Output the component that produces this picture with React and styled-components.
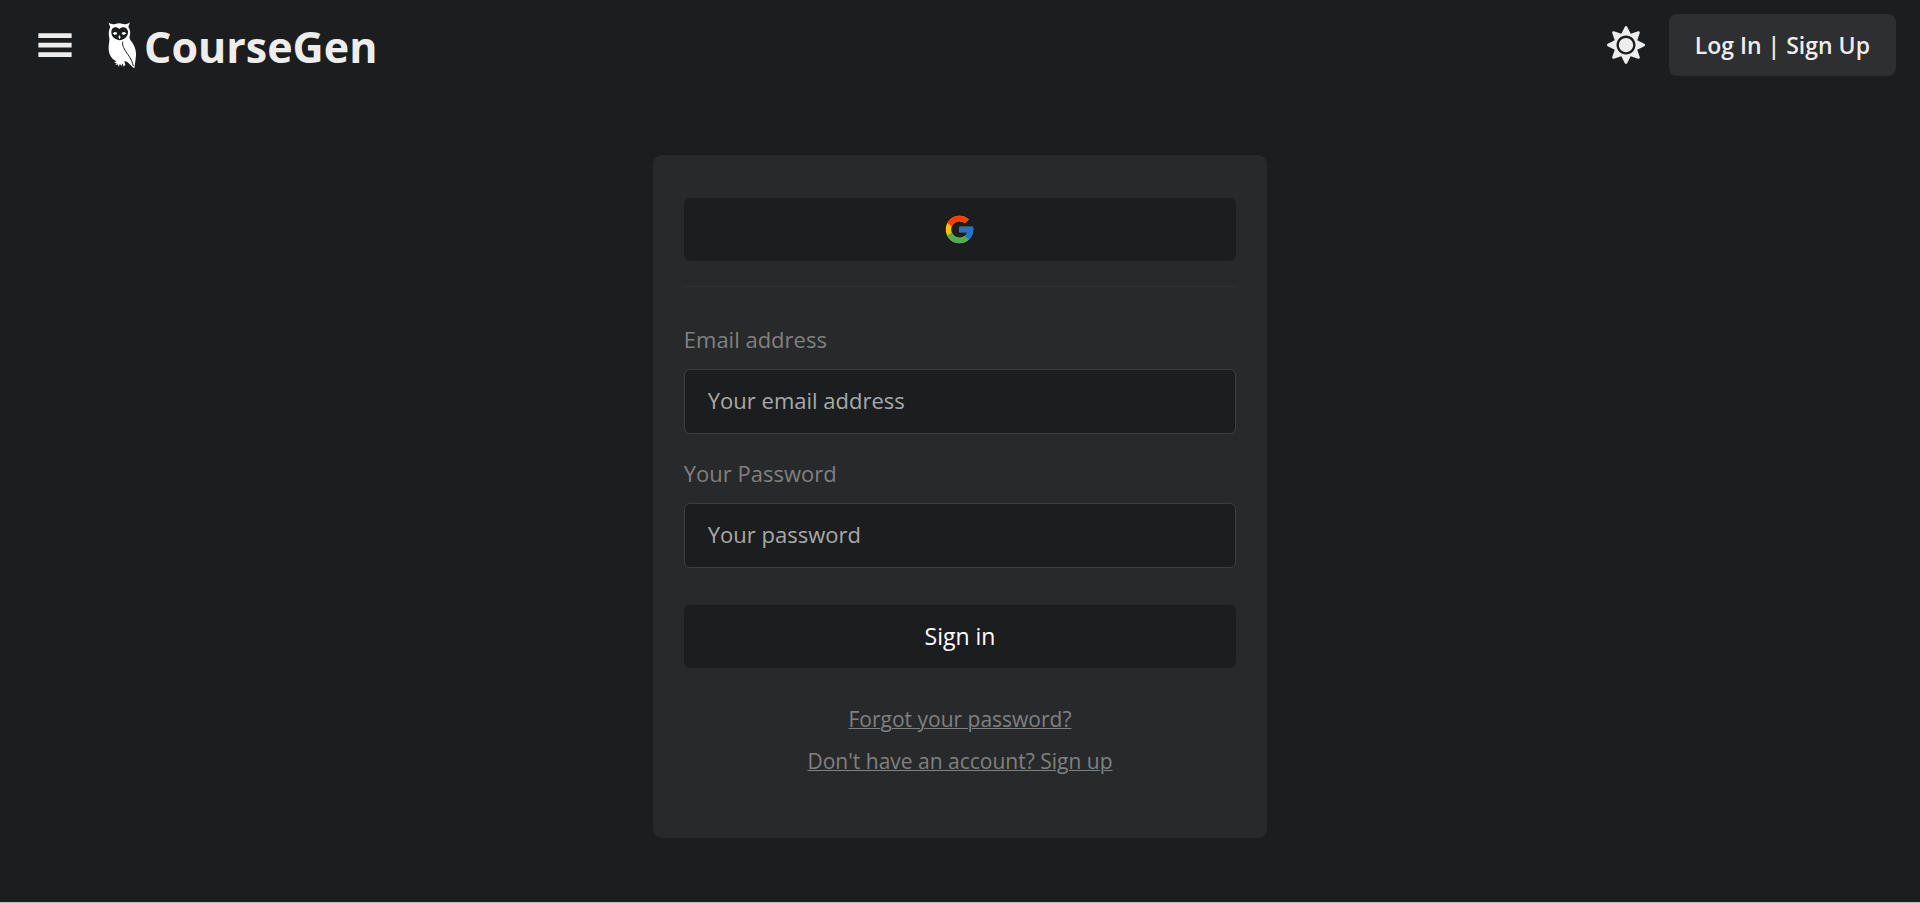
import React from 'react'
import styled, { createGlobalStyle } from 'styled-components'

// Icons
import { GiHamburgerMenu } from 'react-icons/gi'
import { FaSun } from 'react-icons/fa'
import { FcGoogle } from 'react-icons/fc'

const colors = {
  page: '#1c1d1e',
  card: '#28292b',
  raised: '#2e2f31',
  border: '#3d3e40',
  text: '#ededed',
  muted: '#808080',
  placeholder: '#a9a9a9',
}

const GlobalStyle = createGlobalStyle`
  * {
    box-sizing: border-box;
  }

  body {
    margin: 0;
    background: ${colors.page};
    color: ${colors.text};
    font-family: 'Segoe UI', 'Open Sans', 'Noto Sans', sans-serif;
  }
`

const Page = styled.div`
  display: flex;
  flex-direction: column;
  min-height: 100vh;
  border-bottom: 1px solid #b9b9b9;
`

const Header = styled.header`
  display: flex;
  align-items: center;
  justify-content: space-between;
  padding: 14px 24px 14px 36px;
`

const HeaderGroup = styled.div`
  display: flex;
  align-items: center;
  gap: ${({ $gap }) => $gap};
`

const IconButton = styled.button`
  display: flex;
  padding: 0;
  border: none;
  background: none;
  color: ${colors.text};
  font-size: 38px;
  cursor: pointer;
`

const Brand = styled.a`
  display: flex;
  align-items: center;
  gap: 8px;
  color: ${colors.text};
  text-decoration: none;
`

const BrandName = styled.span`
  padding-top: 4px;
  font-size: 43px;
  font-weight: 700;
  line-height: 52px;
`

const LoginButton = styled.button`
  height: 62px;
  padding: 0 26px;
  border: none;
  border-radius: 8px;
  background: ${colors.raised};
  color: ${colors.text};
  font-family: inherit;
  font-size: 23px;
  font-weight: 600;
  cursor: pointer;
`

const Main = styled.main`
  display: flex;
  justify-content: center;
  padding: 65px 0 48px;
`

const Card = styled.section`
  width: 32%;
  min-width: 400px;
  padding: 43px 31px 62px;
  border-radius: 9px;
  background: ${colors.card};
`

const FormButton = styled.button`
  display: flex;
  align-items: center;
  justify-content: center;
  width: 100%;
  height: 63px;
  padding: 0;
  border: none;
  border-radius: 6px;
  background: ${colors.page};
  color: #fff;
  font-family: inherit;
  font-size: 23px;
  cursor: pointer;
`

const SubmitButton = styled(FormButton)`
  padding-bottom: 2px;
`

const Divider = styled.hr`
  height: 1px;
  margin: 25px 0 37px;
  border: none;
  background: ${colors.raised};
`

const Form = styled.form`
  display: flex;
  flex-direction: column;
`

const Field = styled.div`
  display: flex;
  flex-direction: column;
  gap: 15px;
  margin-bottom: ${({ $last }) => ($last ? '37px' : '24px')};
`

const Label = styled.label`
  color: ${colors.muted};
  font-size: 22px;
  line-height: 30px;
`

const Input = styled.input`
  width: 100%;
  height: 65px;
  padding: 0 23px 4px;
  border: 1px solid ${colors.border};
  border-radius: 6px;
  outline: none;
  background: ${colors.page};
  color: ${colors.text};
  font-family: inherit;
  font-size: 22px;

  &::placeholder {
    color: ${colors.placeholder};
    opacity: 1;
  }
`

const Links = styled.nav`
  display: flex;
  flex-direction: column;
  align-items: center;
  gap: 12px;
  margin-top: 36px;
`

const TextLink = styled.a`
  color: ${colors.muted};
  font-size: 21px;
  line-height: 30px;
  text-decoration-thickness: 1px;
  text-underline-offset: 1px;
`

const Owl = () => (
  <svg width="28" height="47" viewBox="0 0 84 141" aria-hidden="true">
    {/* head and body */}
    <path
      fill="#fff"
      d="M2 1 C8 7 15 8 22 6 Q33 2 45 6 C52 8 59 7 65 1 C65 7 62 11 61 15
         C67 23 68 34 65 43 C64 50 66 53 70 58 C80 71 85 86 84 100
         C83 114 81 125 79 139 C71 134 66 125 57 119 L49 117
         L52 128 L47 134 L44 124 L40 133 L36 125 L32 134 L29 127 L22 130
         L26 123 L18 122 L25 118 C10 111 1 96 2 76 C2 66 5 58 4 49
         C1 37 2 24 7 15 C5 12 3 8 2 1 Z"
    />
    {/* face */}
    <path
      fill={colors.page}
      d="M34 21 C25 11 11 15 10 28 C9 42 18 52 34 55 C51 53 61 43 60 28
         C58 15 43 11 34 21 Z"
    />
    <path
      fill="#fff"
      d="M14 34 L20 30 Q26 30 28 34 Q25 40 19 38 Z M41 34 Q43 30 49 30
         L55 34 L49 38 Q43 40 41 34 Z M34 39 L38 45 L35 52 L31 45 Z"
    />
    {/* wing */}
    <path
      fill="none"
      stroke={colors.page}
      strokeWidth="3"
      d="M45 59 C41 67 47 78 54 89 C62 102 71 111 76 132"
    />
  </svg>
)

const App = () => (
  <>
    <GlobalStyle />
    <Page>
      <Header>
        <HeaderGroup $gap="34px">
          <IconButton type="button" aria-label="Open menu">
            <GiHamburgerMenu />
          </IconButton>
          <Brand href="#">
            <Owl />
            <BrandName>CourseGen</BrandName>
          </Brand>
        </HeaderGroup>
        <HeaderGroup $gap="24px">
          <IconButton type="button" aria-label="Toggle theme">
            <FaSun />
          </IconButton>
          <LoginButton type="button">Log In | Sign Up</LoginButton>
        </HeaderGroup>
      </Header>

      <Main>
        <Card>
          <FormButton type="button" aria-label="Sign in with Google">
            <FcGoogle size={33} />
          </FormButton>
          <Divider />
          <Form>
            <Field>
              <Label htmlFor="email">Email address</Label>
              <Input id="email" type="email" placeholder="Your email address" />
            </Field>
            <Field $last>
              <Label htmlFor="password">Your Password</Label>
              <Input
                id="password"
                type="password"
                placeholder="Your password"
              />
            </Field>
            <SubmitButton type="submit">Sign in</SubmitButton>
          </Form>
          <Links>
            <TextLink href="#">Forgot your password?</TextLink>
            <TextLink href="#">Don't have an account? Sign up</TextLink>
          </Links>
        </Card>
      </Main>
    </Page>
  </>
)

export default App
